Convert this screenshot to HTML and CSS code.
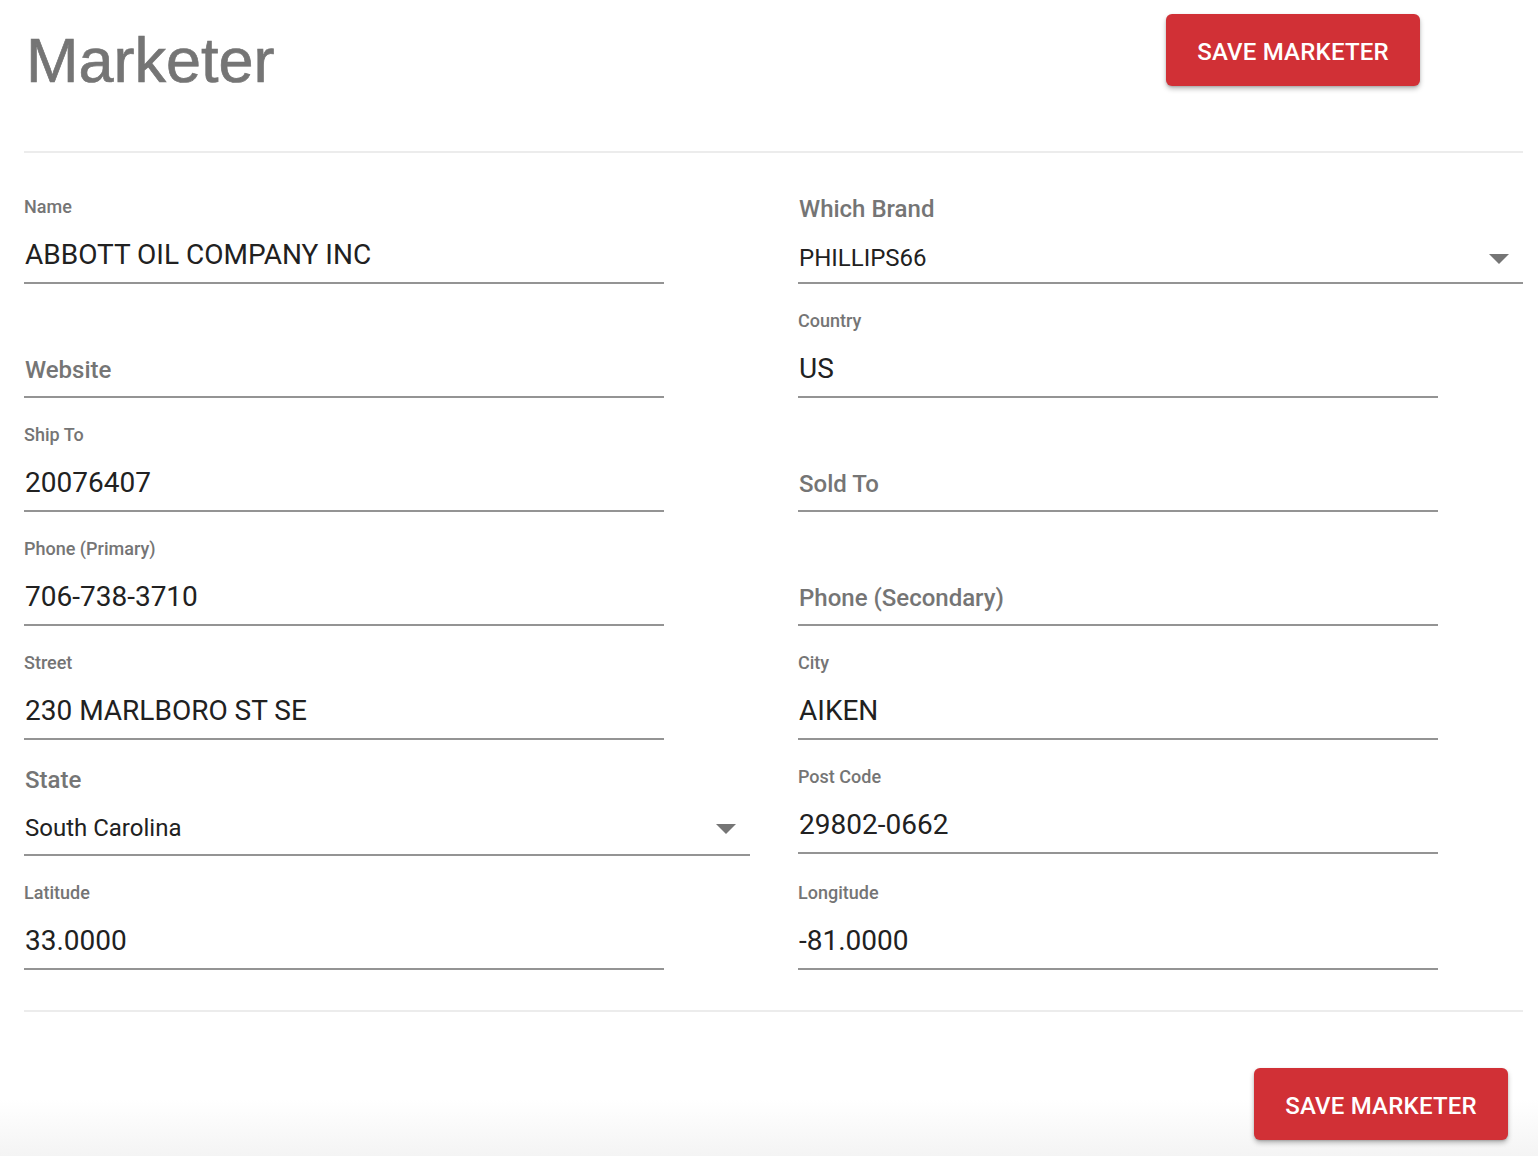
FILE: index.html
```html
<!DOCTYPE html>
<html lang="en">
<head>
<meta charset="utf-8">
<title>Marketer</title>
<link rel="stylesheet" href="styles.css">
</head>
<body>
<div class="page">
  <header class="header">
    <h1 class="title">Marketer</h1>
    <button class="btn btn-top" type="button">SAVE MARKETER</button>
  </header>

  <form class="form">
    <div class="field"><label class="lbl">Name</label><div class="input">ABBOTT OIL COMPANY INC</div></div>
    <div class="field brand"><label class="lbl big">Which Brand</label><div class="input select"><span>PHILLIPS66</span><span class="arrow"></span></div></div>

    <div class="field"><div class="input placeholder">Website</div></div>
    <div class="field"><label class="lbl">Country</label><div class="input">US</div></div>

    <div class="field"><label class="lbl">Ship To</label><div class="input">20076407</div></div>
    <div class="field"><div class="input placeholder">Sold To</div></div>

    <div class="field"><label class="lbl">Phone (Primary)</label><div class="input">706-738-3710</div></div>
    <div class="field"><div class="input placeholder">Phone (Secondary)</div></div>

    <div class="field"><label class="lbl">Street</label><div class="input">230 MARLBORO ST SE</div></div>
    <div class="field"><label class="lbl">City</label><div class="input">AIKEN</div></div>

    <div class="field state"><label class="lbl big">State</label><div class="input select"><span>South Carolina</span><span class="arrow"></span></div></div>
    <div class="field"><label class="lbl">Post Code</label><div class="input">29802-0662</div></div>

    <div class="field"><label class="lbl">Latitude</label><div class="input">33.0000</div></div>
    <div class="field"><label class="lbl">Longitude</label><div class="input">-81.0000</div></div>
  </form>

  <footer class="footer">
    <button class="btn" type="button">SAVE MARKETER</button>
  </footer>
</div>
</body>
</html>
```

FILE: styles.css
```css
html {
  background: linear-gradient(to bottom, #ffffff 0, #ffffff 1100px, #f4f4f4 1156px);
}
body {
  margin: 0;
  height: 1156px;
  overflow: hidden;
  font-family: Roboto, "Liberation Sans", sans-serif;
}
.page {
  padding: 0 15px 0 24px;
}
.header {
  display: grid;
  grid-template-columns: 1142px 254px;
  align-items: start;
  height: 151px;
  border-bottom: 2px solid #ececec;
}
.title {
  margin: 24px 0 0 2px;
  font-family: "Liberation Sans", Arial, sans-serif;
  font-weight: 500;
  font-size: 63px;
  line-height: 72px;
  color: #757575;
  -webkit-text-stroke: 0.7px #757575;
}
.btn {
  width: 254px;
  height: 72px;
  border: none;
  border-radius: 6px;
  background: #d13036;
  color: #ffffff;
  font-family: Roboto, "Liberation Sans", sans-serif;
  font-weight: 500;
  font-size: 24px;
  letter-spacing: 0.2px;
  box-shadow: 0 3px 5px rgba(0, 0, 0, 0.25), 0 1px 2px rgba(0, 0, 0, 0.15);
  padding: 3px 0 0 0;
}
.btn-top {
  margin-top: 14px;
}
.form {
  display: grid;
  grid-template-columns: 774px 725px;
  align-items: start;
  padding-top: 17px;
}
.field {
  display: flex;
  flex-direction: column;
  justify-content: flex-end;
  width: 640px;
  height: 114px;
}
.field.brand {
  width: 725px;
  height: 114px;
}
.field.state {
  width: 726px;
  height: 116px;
}
.lbl {
  display: block;
  font-size: 18px;
  line-height: 20px;
  font-weight: 500;
  color: #757575;
  margin-bottom: 13px;
}
.lbl.big {
  font-size: 24px;
  line-height: 28px;
  margin-bottom: 9px;
  padding-left: 1px;
}
.state .lbl.big {
  margin-bottom: 8px;
}
.input {
  box-sizing: border-box;
  height: 54px;
  border-bottom: 2px solid #949494;
  display: flex;
  align-items: center;
  font-size: 28px;
  color: #212121;
  padding: 0 0 3px 1px;
}
.input.placeholder {
  font-size: 24px;
  font-weight: 500;
  color: #757575;
  padding-bottom: 1px;
}
.input.select {
  font-size: 24px;
  justify-content: space-between;
  padding: 2px 14px 0 1px;
  height: 52px;
}
.state .input.select {
  height: 54px;
  padding-top: 0;
}
.arrow {
  width: 0;
  height: 0;
  border-left: 10px solid transparent;
  border-right: 10px solid transparent;
  border-top: 10px solid #757575;
  margin-top: 2px;
}
.footer {
  margin-top: 40px;
  border-top: 2px solid #ececec;
  display: flex;
  justify-content: flex-end;
  padding: 56px 15px 0 0;
}
```
